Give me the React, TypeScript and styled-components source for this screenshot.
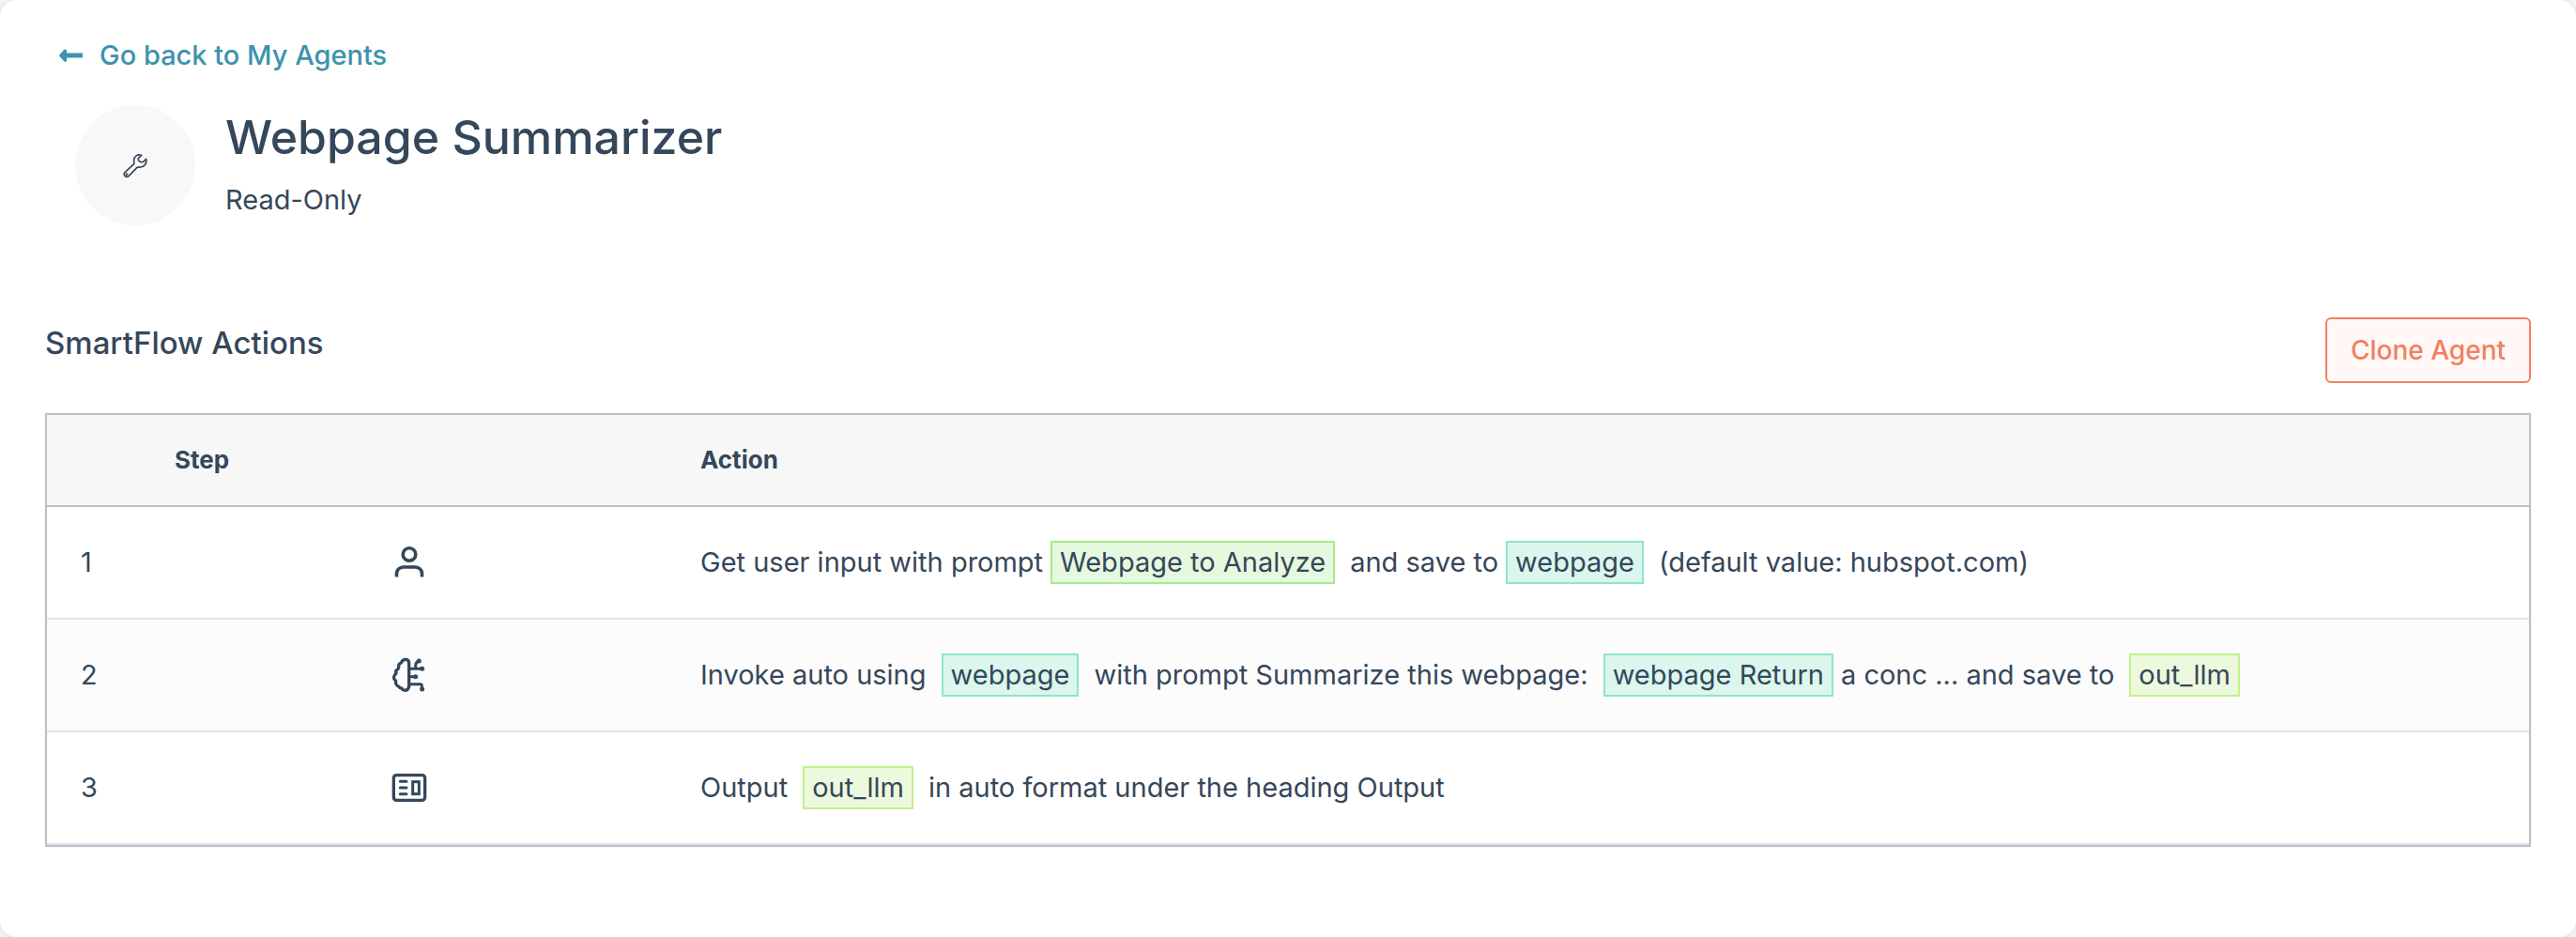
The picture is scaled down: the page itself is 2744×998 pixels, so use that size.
import React from "react";
import styled, { createGlobalStyle } from "styled-components";

const ink = "#35475a";

const GlobalStyle = createGlobalStyle`
  *, *::before, *::after { box-sizing: border-box; }
  body {
    margin: 0;
    background: #f3f3f3;
    color: ${ink};
    font-family: Inter, "Liberation Sans", sans-serif;
    font-size: 29px;
    line-height: 38px;
  }
  h1, h2, p { margin: 0; }
`;

const Card = styled.main`
  min-height: 100vh;
  padding: 40px 48px 96px;
  background: #fff;
  border-radius: 18px;
  box-shadow: 0 0 0 2px #e9e8fa;
`;

const BackLink = styled.a`
  display: inline-flex;
  align-items: center;
  gap: 17px;
  margin-left: 15px;
  color: #3d93ad;
  font-weight: 500;
  text-decoration: none;
  vertical-align: top;
`;

const AgentHeader = styled.header`
  display: flex;
  gap: 32px;
  margin: 34px 0 98px 32px;
`;

const Avatar = styled.div`
  display: grid;
  place-items: center;
  width: 128px;
  height: 128px;
  border-radius: 50%;
  background: #f8f8f8;
`;

const AgentName = styled.h1`
  margin-top: 4px;
  font-size: 50px;
  line-height: 60px;
  font-weight: 500;
`;

const AgentMode = styled.p`
  margin-top: 18px;
`;

const SectionBar = styled.div`
  display: flex;
  align-items: flex-start;
  justify-content: space-between;
  margin-bottom: 32px;
`;

const SectionTitle = styled.h2`
  font-size: 33px;
  line-height: 54px;
  font-weight: 500;
`;

const CloneButton = styled.button`
  height: 70px;
  padding: 0 25px;
  border: 2px solid #f2805f;
  border-radius: 6px;
  background: #fff8f6;
  color: #f2805f;
  font-family: inherit;
  font-size: 28px;
  font-weight: 500;
  cursor: pointer;
`;

const TableFrame = styled.div`
  border: 2px solid #b9bfc7;
`;

const Table = styled.table`
  width: 100%;
  table-layout: fixed;
  border-collapse: separate;
  border-spacing: 0;
`;

const NumberCol = styled.col`
  width: 112px;
`;

const StepCol = styled.col`
  width: 548px;
`;

const HeadCell = styled.th<{ $inset?: number }>`
  height: 98px;
  padding: 0 ${(p) => p.$inset ?? 36}px;
  border-bottom: 2px solid #b9bfc7;
  background: #f7f7f7;
  font-size: 26px;
  font-weight: 700;
  text-align: left;
`;

const Row = styled.tr`
  &:nth-child(even) { background: #fcfcfc; }
`;

const Cell = styled.td<{ $center?: boolean }>`
  height: 120px;
  padding: 0 ${(p) => (p.$center ? 0 : 36)}px;
  border-bottom: 2px solid #dfe3eb;
  white-space: nowrap;
`;

const ActionLine = styled.div`
  display: flex;
  align-items: center;
`;

type Tone = "green" | "teal" | "lime";

const tones: Record<Tone, { edge: string; fill: string }> = {
  green: { edge: "#a6eb8a", fill: "#e5f9de" },
  teal: { edge: "#8ce6cb", fill: "#dbf6ed" },
  lime: { edge: "#c2f08a", fill: "#ecf9dc" },
};

const Chip = styled.span<{ $tone: Tone; $before: number; $after: number }>`
  height: 46px;
  margin: 0 ${(p) => p.$after}px 0 ${(p) => p.$before}px;
  padding: 0 8px;
  border: 2px solid ${(p) => tones[p.$tone].edge};
  background: ${(p) => tones[p.$tone].fill};
  line-height: 42px;
`;

const Glyph = styled.svg`
  display: block;
  margin: 0 auto;
  fill: none;
  stroke: ${ink};
  stroke-linecap: round;
  stroke-linejoin: round;
`;

const ArrowIcon = () => (
  <svg width="26" height="16" viewBox="0 0 26 16" aria-hidden="true">
    <path
      d="M.6 7 5.200 2q1.200-1 2.500 0 .5.5.5 1.200V5.600H25v5H8.200V13q0 .700-.5 1.200-1.300 1-2.500 0L.6 9.200Q-.2 8 .6 7z"
      fill="#3d93ad"
    />
  </svg>
);

const WrenchIcon = () => (
  <Glyph width="28" height="28" viewBox="60 64 84 84" strokeWidth="5" aria-hidden="true">
    <path d="M122 74C111 69 97 77 98 92c0 4 1 7 0 10L69 129c-7 7 4 19 12 12l27-28c4-1 7 0 11-1 13-1 21-13 18-26l-9 9c-5 2-12 0-14-3-2-3-3-7-1-9z" />
    <circle cx="75" cy="135" r="1.500" />
  </Glyph>
);

const UserIcon = () => (
  <Glyph width="40" height="40" viewBox="16 19 40 40" strokeWidth="3.6" aria-hidden="true">
    <circle cx="36" cy="30.500" r="6.800" />
    <path d="M22.500 54.500V51a7 7 0 0 1 7-7h13a7 7 0 0 1 7 7v3.500" strokeLinecap="butt" />
  </Glyph>
);

const BrainIcon = () => (
  <Glyph width="40" height="40" viewBox="48 57 120 120" strokeWidth="10" aria-hidden="true">
    <path d="M107 77C105 64 87 64 82 78c-6 2-9 8-8 14 0 4-2 6-5 8-4 3-5 8-3 12-10 7-10 17-1 24-2 9 3 16 10 18 1 3 4 5 8 5 7 11 22 9 24-6z" />
    <path d="M107 97h41M128 97V87q0-11 10-15M107 122h20M107 146h36q5 0 5 5v11" strokeWidth="9" />
    <g fill={ink} strokeWidth="0">
      <circle cx="139" cy="72" r="7.500" />
      <circle cx="149" cy="97" r="7.500" />
      <circle cx="128" cy="122" r="7.500" />
      <circle cx="149" cy="162" r="7.500" />
    </g>
  </Glyph>
);

const ArticleIcon = () => (
  <Glyph width="40" height="40" viewBox="47 57 120 120" strokeWidth="10" aria-hidden="true">
    <rect x="57" y="77" width="100" height="80" rx="9" />
    <path d="M78 97h20M78 117h20M78 137h20" strokeWidth="9" />
    <rect x="118" y="98" width="20" height="39" strokeWidth="9" strokeLinejoin="miter" />
  </Glyph>
);

export default function App() {
  return (
    <>
      <GlobalStyle />
      <Card>
        <BackLink href="#my-agents">
          <ArrowIcon />
          Go back to My Agents
        </BackLink>

        <AgentHeader>
          <Avatar>
            <WrenchIcon />
          </Avatar>
          <div>
            <AgentName>Webpage Summarizer</AgentName>
            <AgentMode>Read-Only</AgentMode>
          </div>
        </AgentHeader>

        <SectionBar>
          <SectionTitle>SmartFlow Actions</SectionTitle>
          <CloneButton type="button">Clone Agent</CloneButton>
        </SectionBar>

        <TableFrame>
          <Table>
            <colgroup>
              <NumberCol />
              <StepCol />
              <col />
            </colgroup>
            <thead>
              <tr>
                <HeadCell aria-label="Number" />
                <HeadCell $inset={24}>Step</HeadCell>
                <HeadCell>Action</HeadCell>
              </tr>
            </thead>
            <tbody>
              <Row>
                <Cell>1</Cell>
                <Cell $center><UserIcon /></Cell>
                <Cell>
                  <ActionLine>
                    Get user input with prompt
                    <Chip $tone="green" $before={8} $after={16}>Webpage to Analyze</Chip>
                    and save to
                    <Chip $tone="teal" $before={8} $after={16}>webpage</Chip>
                    (default value: hubspot.com)
                  </ActionLine>
                </Cell>
              </Row>
              <Row>
                <Cell>2</Cell>
                <Cell $center><BrainIcon /></Cell>
                <Cell>
                  <ActionLine>
                    Invoke auto using
                    <Chip $tone="teal" $before={16} $after={16}>webpage</Chip>
                    with prompt Summarize this webpage:
                    <Chip $tone="teal" $before={16} $after={8}>webpage Return</Chip>
                    a conc ... and save to
                    <Chip $tone="lime" $before={16} $after={0}>out_llm</Chip>
                  </ActionLine>
                </Cell>
              </Row>
              <Row>
                <Cell>3</Cell>
                <Cell $center><ArticleIcon /></Cell>
                <Cell>
                  <ActionLine>
                    Output
                    <Chip $tone="lime" $before={16} $after={16}>out_llm</Chip>
                    in auto format under the heading Output
                  </ActionLine>
                </Cell>
              </Row>
            </tbody>
          </Table>
        </TableFrame>
      </Card>
    </>
  );
}
